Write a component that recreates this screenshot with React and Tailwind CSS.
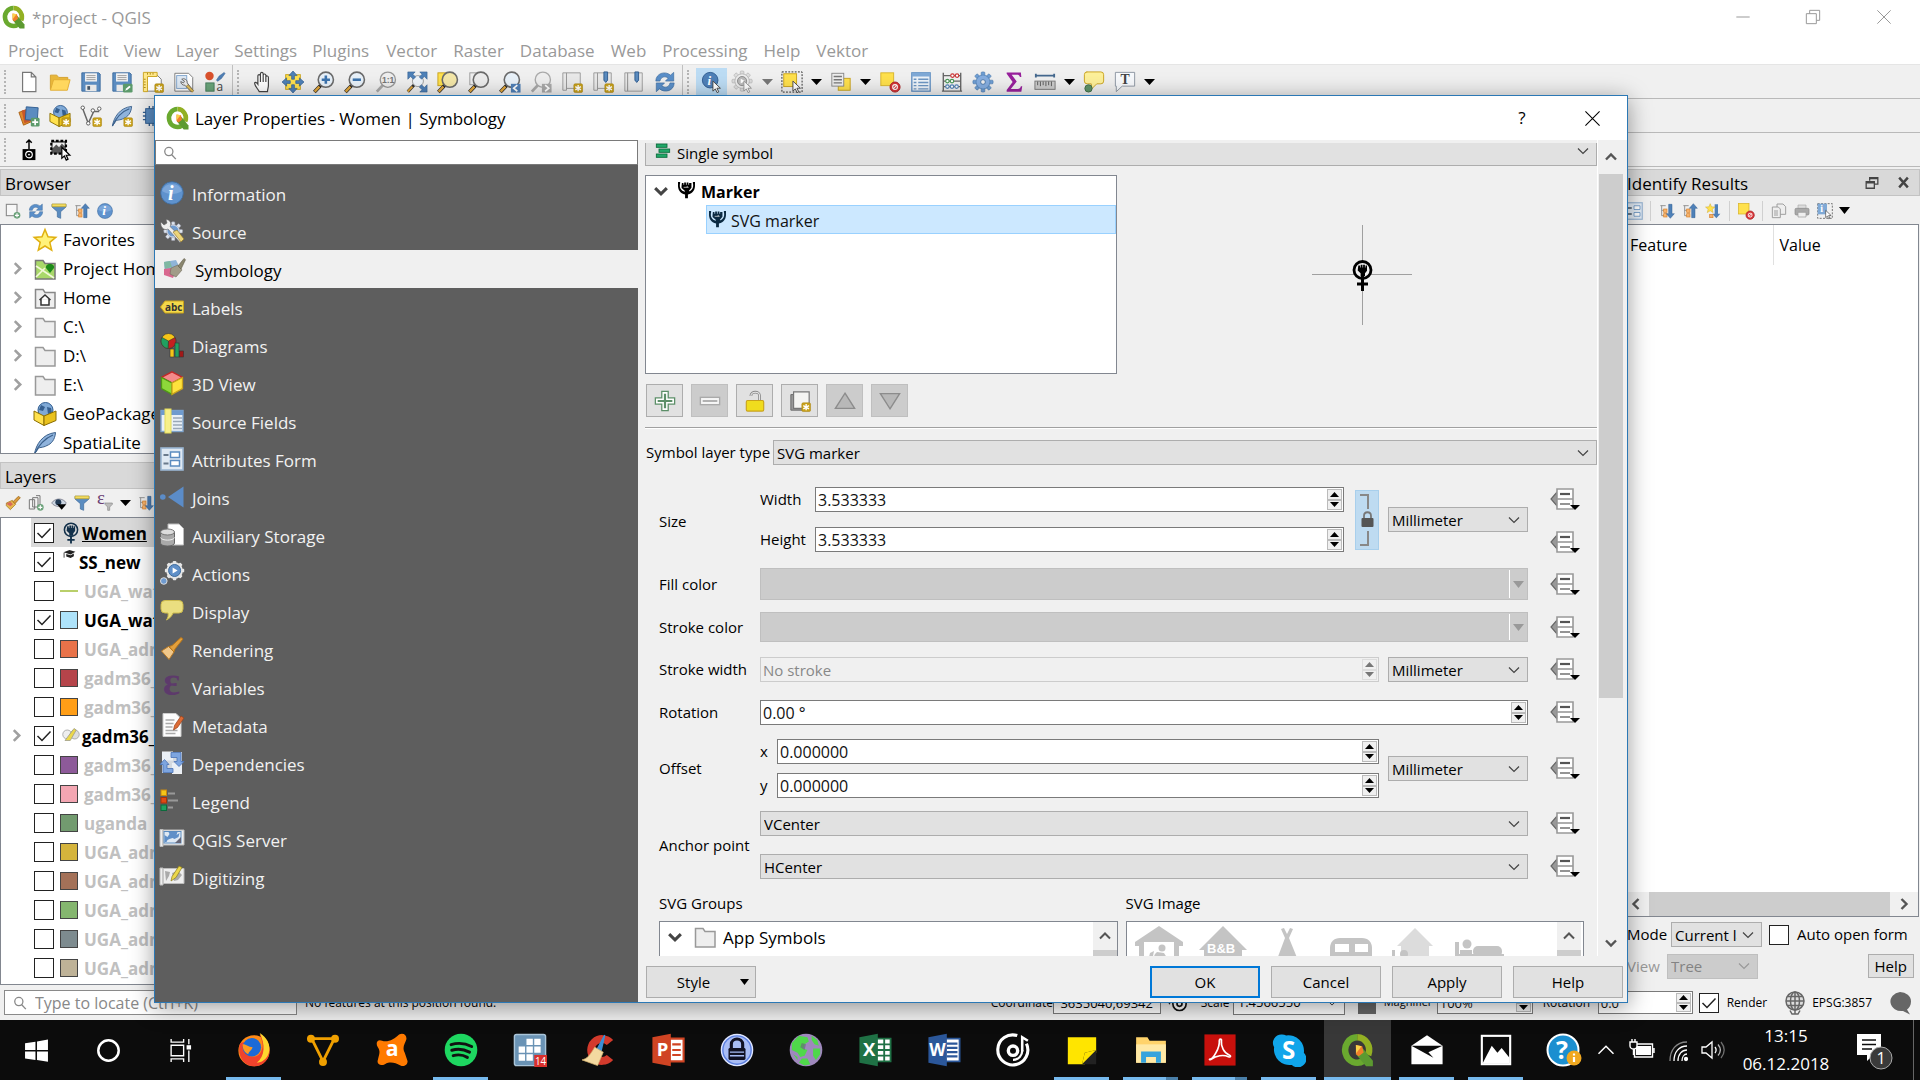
import React from 'react';

const star = 'M12 1.5l3 7.3 7.8.6-6 5 1.9 7.7L12 18l-6.7 4.1 1.9-7.7-6-5 7.8-.6z';
const badge = (
  <g>
    <rect x="14" y="14" width="9.5" height="9.5" rx="1.5" fill="#c9a21b" stroke="#a88412" strokeWidth=".6" />
    <path d="M18.7 15.2v7M15.6 17l6.2 3.6M15.6 20.6l6.2-3.6" stroke="#fff" strokeWidth="1.5" />
  </g>
);
const magnifier = (fill = '#e8f1f9', stroke = '#6b6b6b', handle = '#e3a83c') => (
  <g>
    <path d="M9 15L1.500 23" stroke="#222" strokeWidth="4" />
    <path d="M7 17L1.800 22.500" stroke={handle} strokeWidth="2.600" />
    <circle cx="14" cy="9.500" r="8.300" fill={fill} stroke={stroke} strokeWidth="1.700" />
  </g>
);
const cursor = (c = '#444', f = '#fff') => (
  <path d="M13 11v11l2.600-2.400 2 4 1.800-.9-2-3.900h3.800z" fill={f} stroke={c} strokeWidth="1" />
);
const gearPath = (
  <g>
    {[0, 45, 90, 135].map((a) => (
      <rect key={a} x="10" y="1" width="4" height="22" rx="1" transform={`rotate(${a} 12 12)`} />
    ))}
    <circle cx="12" cy="12" r="7.600" />
  </g>
);
const treeLines = (
  <g>
    <path d="M2 4h8M4 4v15h5M4 11h5" stroke="#888" strokeWidth="1.300" fill="none" />
    <rect x="7" y="9" width="5" height="5" fill="#f6b26b" stroke="#d9822b" />
    <rect x="7" y="16" width="5" height="5" fill="#f6b26b" stroke="#d9822b" />
  </g>
);
const fist = (
  <g>
    <path d="M7.800 4.500h1.800v2h.6V3.700H12v2.800h.6V3.700h1.800v2.800h.6V4.500h1.500v5.200l-2 2.500V15h-4.400v-2.800L7.200 9.600z" />
  </g>
);
const folderShape = 'M2.500 3.500h7.500l2 3h10v15.500H2.500z';

const ICONS = {
  qgis: (
    <g>
      <path d="M11.500 3a8.500 9 0 1 0 4.500 16.600" fill="none" stroke="#6aa92f" strokeWidth="4.600" />
      <path d="M11.500 3a8.500 9 0 0 1 7.700 12.500" fill="none" stroke="#93b023" strokeWidth="4.600" />
      <path d="M11 11.500l4.500-.5 7 8.500v4h-4.800L11 15.500z" fill="#5c9a30" />
      <path d="M10.500 8.500l4.500.8 1 4.500-3.500 2.600-2-1.400z" fill="#f07f2a" />
      <path d="M10.500 8.500l4 .8-3.800 5z" fill="#f9d24a" />
    </g>
  ),
  newDoc: <path d="M5 1.500h9.500l5 5v16H5zM14.500 1.500v5h5" fill="#fff" stroke="#777" strokeWidth="1.300" />,
  openFolder: (
    <g>
      <path d="M1.500 20V4.500h7l2 2.500h10v3" fill="#e8b73a" stroke="#d39f28" />
      <path d="M1.500 21L5 9.500h18L20 21z" fill="#ffd75e" stroke="#e0ac33" />
    </g>
  ),
  save: (
    <g>
      <path d="M2 2h18.500l1.500 1.500V22H2z" fill="#5b8cc0" stroke="#3c6a9c" />
      <path d="M5.500 2.500h13v9h-13z" fill="#f3f3f3" />
      <path d="M7 5h10M7 7.200h10M7 9.400h10" stroke="#999" />
      <path d="M6 15h12v7H6z" fill="#e8e8e8" />
      <path d="M8 16.500h3v4H8z" fill="#456" />
    </g>
  ),
  saveAs: (
    <g>
      <path d="M2 2h18.500l1.500 1.500V22H2z" fill="#5b8cc0" stroke="#3c6a9c" />
      <path d="M5.500 2.500h13v9h-13z" fill="#f3f3f3" />
      <path d="M7 5h10M7 7.200h10M7 9.400h10" stroke="#999" />
      <path d="M6 15h12v7H6z" fill="#e8e8e8" />
      <rect x="13" y="14" width="10.500" height="9.500" rx="1.500" fill="#5c9a6b" />
      <path d="M15.500 21.500l1-2.500 3.500-3 1.500 1.500-3.500 3z" fill="#fff" />
    </g>
  ),
  newLayout: (
    <g>
      <path d="M4 4h12l5 5v13H4z" fill="#fff" stroke="#777" />
      <path d="M1.500 1.500h15V6H6v16.500H1.500z" fill="#ffe88a" stroke="#c9a21b" />
      <path d="M6 2v2M9 2v2M12 2v2M2 9h2M2 12h2M2 15h2M2 18h2" stroke="#a88412" />
      {badge}
    </g>
  ),
  layoutMgr: (
    <g>
      <path d="M2 2.500h15l4.500 4.500v15H2z" fill="#fff" stroke="#777" />
      <rect x="4" y="5" width="11" height="14" fill="#dfeaf5" stroke="#7fa4cc" />
      <path d="M9.500 9a4 4 0 0 1 6 4l6.500 8-2 2-7-7.500a4 4 0 0 1-4.500-4l3 1.500 1-2z" fill="#eee" stroke="#666" />
      <path d="M16 15l6.500 6.500-1.500 1.700L14.500 17z" fill="#e3c05c" stroke="#8a6d1d" strokeWidth=".6" />
    </g>
  ),
  styleMgr: (
    <g>
      <circle cx="6" cy="5.500" r="4.600" fill="#d9512c" />
      <path d="M13.500 10l3-4.500L22 1.500l1 1.200-4 5.500-4 3z" fill="#4f7fb5" stroke="#2e5b8f" strokeWidth=".5" />
      <rect x="2" y="13" width="9" height="9" fill="#6aa57a" stroke="#44795a" />
      <text x="13.500" y="22" fontSize="13" fill="#444" fontFamily="Open Sans">a</text>
    </g>
  ),
  hand: (
    <path d="M7 22.500C5 19 2 16 2 13.500c0-1.600 2-1.600 3.500.9V5.500c0-2 2.600-2 2.800 0V3c.2-2 2.800-2 3 0v1.500c.3-1.800 2.700-1.600 2.900.2V6.500c.4-1.600 2.800-1.400 2.800.6v8.400c0 3-1 4.500-1 7z M8.300 5.500V12M11.300 4v8M14.200 5.500V12" fill="#fff" stroke="#444" strokeWidth="1.300" transform="translate(2 0)" />
  ),
  pan: (
    <g>
      <rect x="4" y="4" width="16" height="16" fill="#ffe14d" stroke="#c9a21b" />
      {[0, 90, 180, 270].map((a) => (
        <path key={a} d="M12 0l4.500 5h-3v4h-3V5h-3z" transform={`rotate(${a} 12 12)`} fill="#4f81b8" stroke="#2e5b8f" strokeWidth=".7" />
      ))}
    </g>
  ),
  zoomIn: <g>{magnifier()}<path d="M14 5v9M9.500 9.500h9" stroke="#3c73ad" strokeWidth="2.800" /></g>,
  zoomOut: <g>{magnifier()}<path d="M9.500 9.500h9" stroke="#3c73ad" strokeWidth="2.800" /></g>,
  zoomOne: <g><path d="M9 15L2 22.500" stroke="#aaa" strokeWidth="3" /><circle cx="14" cy="9.500" r="8.300" fill="#eee" stroke="#999" strokeWidth="1.500" /><text x="7.500" y="13" fontSize="9.500" fill="#777" fontWeight="700" fontFamily="Liberation Sans">1:1</text></g>,
  zoomFull: (
    <g>
      <path d="M9 15L2 22.500" stroke="#333" strokeWidth="3.400" /><path d="M7 17L2 22.300" stroke="#e3a83c" strokeWidth="2.200" />
      <circle cx="13" cy="11" r="6" fill="#eef4fa" stroke="#999" />
      <path d="M2 1h8L7.500 3.500l3 3-2.500 2.500-3-3L2 9zM23 1v8l-3-3-3 3-2.500-2.500 3-3L15 1zM23 23h-8l2.500-2.500-3-3L17 15l3 3 3-3z" fill="#4f81b8" stroke="#2e5b8f" strokeWidth=".6" />
    </g>
  ),
  zoomSel: <g><rect x="1" y="2" width="13" height="14" fill="#ffe14d" stroke="#c9a21b" />{magnifier('#f4e7a8')}</g>,
  zoomLayer: <g><rect x="2" y="2" width="12" height="13" fill="#eee" stroke="#999" />{magnifier('#ececec')}</g>,
  zoomLast: <g>{magnifier()}<rect x="13" y="14" width="10.500" height="9.500" fill="#4f81b8" /><path d="M20 15.500l-4 3.300 4 3.300" fill="none" stroke="#fff" strokeWidth="1.800" /></g>,
  zoomNext: <g><path d="M9 15L2 22.500" stroke="#aaa" strokeWidth="3" /><circle cx="14" cy="9.500" r="8.300" fill="#eee" stroke="#aaa" strokeWidth="1.500" /><rect x="13" y="14" width="10.500" height="9.500" fill="#aaa" /><path d="M16.500 15.500l4 3.300-4 3.300" fill="none" stroke="#fff" strokeWidth="1.800" /></g>,
  newView: <g><path d="M2 2h4v19H2zM6 2h15v17H6z" fill="#e9e9e9" stroke="#999" />{badge}</g>,
  newBookmark: <g><path d="M2 2h4v19H2zM6 2h15v17H6z" fill="#e9e9e9" stroke="#999" /><path d="M13 1h4v9l-2 2.500-2-2.500z" fill="#5b8cc0" stroke="#2e5b8f" />{badge}</g>,
  bookmark: <g><path d="M2 2h3v20H2zM5 2h16v20H5z" fill="#e9e9e9" stroke="#999" /><path d="M13 1h4v9l-2 2.500-2-2.500z" fill="#5b8cc0" stroke="#2e5b8f" /></g>,
  refresh: (
    <g fill="#5a8fc9" stroke="#3c6a9c" strokeWidth=".7">
      <path d="M2 11C2 2.500 12-.5 18 4.500L21.500 1.500V11h-9l3-3.200C11.500 5 7.500 6.500 6.500 11z" />
      <path d="M22 13c0 8.500-10 11.500-16 6.500L2.500 22.500V13h9l-3 3.200c4 2.800 8 1.300 9-3.200z" />
    </g>
  ),
  identify: <g><circle cx="10" cy="10" r="8.500" fill="#4f81b8" stroke="#2e5b8f" /><text x="7" y="15" fontSize="14" fill="#fff" fontStyle="italic" fontWeight="700" fontFamily="Liberation Serif">i</text>{cursor()}</g>,
  runAction: <g><g fill="#ddd" stroke="#aaa" strokeWidth=".6" transform="translate(-1 -1)">{gearPath}</g><circle cx="11" cy="11" r="7.800" fill="#eee" stroke="#aaa" strokeWidth=".6" /><circle cx="11" cy="11" r="5" fill="#bbb" stroke="#888" /><path d="M9.500 8.500v5l4.500-2.500z" fill="#fff" />{cursor('#999')}</g>,
  select: <g><rect x="3" y="3" width="14" height="14" fill="#ffe14d" stroke="#c9a21b" /><rect x="1" y="1" width="22" height="22" fill="none" stroke="#222" strokeDasharray="2 1.500" />{cursor()}</g>,
  selectValue: <g><rect x="9" y="8" width="13" height="13" fill="#ffe14d" stroke="#c9a21b" /><rect x="2" y="2.500" width="13" height="14" fill="#eee" stroke="#888" /><path d="M4 6h9M4 9.500h9M4 13h9" stroke="#777" strokeWidth="1.500" /></g>,
  deselect: <g><rect x="2" y="2" width="14" height="14" fill="#ffe14d" stroke="#d9b52a" /><circle cx="17.500" cy="17.500" r="5.500" fill="#d9363a" stroke="#a81f22" /><circle cx="17.500" cy="17.500" r="2.600" fill="none" stroke="#fff" strokeWidth="1.200" /><path d="M15.500 19.500l4-4" stroke="#fff" strokeWidth="1.200" /></g>,
  table: <g><rect x="2" y="2" width="20" height="20" fill="#eef4fa" stroke="#5b8cc0" strokeWidth="1.400" /><path d="M2 2h20v4H2z" fill="#7fa9d6" /><path d="M4 9h3M4 12.500h3M4 16h3M4 19.500h3M9 9h11M9 12.500h11M9 16h11M9 19.500h11" stroke="#6e97c4" strokeWidth="1.500" /></g>,
  abacus: <g fill="#fff"><path d="M2.500 2v20M21.500 2v20M1 22h22M3 5h18M3 11h18M3 17h18" stroke="#666" strokeWidth="1.500" /><g stroke="#c33" strokeWidth="1.200"><circle cx="12.500" cy="5" r="1.900" /><circle cx="17.500" cy="5" r="1.900" /></g><g stroke="#4a9a58" strokeWidth="1.200"><circle cx="7" cy="11" r="1.900" /><circle cx="12" cy="11" r="1.900" /></g><g stroke="#4f81b8" strokeWidth="1.200"><circle cx="7" cy="17" r="1.900" /><circle cx="12" cy="17" r="1.900" /><circle cx="17" cy="17" r="1.900" /></g></g>,
  gear: <g><g fill="#6f9fd4" stroke="#4876a8" strokeWidth=".6">{gearPath}</g><circle cx="12" cy="12" r="7" fill="#86aee0" /><circle cx="12" cy="12" r="2.600" fill="#f0f0f0" stroke="#4876a8" /></g>,
  sigma: <path d="M4 1.500h15.500l.5 5h-1.500c-.5-2-1.500-2.500-3.500-2.500H9.500l5.500 7.500L8.500 19.500H16c2 0 3-1 3.500-3H21l-1 6H4v-1.800L10.500 12 4 3z" fill="#98209c" />,
  ruler: <g><path d="M1 5h22M2 3v4M22 3v4" stroke="#44688e" strokeWidth="2" /><rect x="1" y="11" width="22" height="9" fill="#ccc" stroke="#777" /><path d="M4 11.500v4M7 11.500v5M10 11.500v4M13 11.500v5M16 11.500v4M19 11.500v5" stroke="#555" /></g>,
  tip: <g><path d="M4 1h15.500a3 3 0 0 1 3 3v7a3 3 0 0 1-3 3H15l-6 6v-6H4.500a3 3 0 0 1-3-3V4a3 3 0 0 1 3-3z" fill="#fdf09a" stroke="#c9a21b" /><circle cx="6" cy="19" r="4" fill="#5f9468" stroke="#3f6d49" /></g>,
  annot: <g><path d="M1.500 1.500h21v15H9l-6.500 6v-6h-1z" fill="#f7f9fc" stroke="#8a94a0" /><text x="7" y="14.500" fontSize="15" fill="#444" fontWeight="700" fontFamily="Liberation Serif">T</text></g>,
  addLayer: <g><path d="M1 8l9-3 5 13-9 4z" fill="#e08a2c" stroke="#a85f13" /><path d="M4 6l11-3 3 13-11 4z" fill="#c8582a" /><path d="M9 2l13 1-1 14-13-1z" fill="#5b8cc0" stroke="#2e5b8f" /><rect x="14" y="14" width="9.500" height="9.500" rx="1.500" fill="#5c9a6b" /><path d="M18.700 15.500v6.500M15.500 18.700h6.500" stroke="#fff" strokeWidth="1.800" /></g>,
  geopkg: <g><circle cx="12.500" cy="8" r="7.500" fill="#7fa9d6" stroke="#2e5b8f" /><path d="M8 3l4 2-2 4-4-1zM14 5l4 1 1 5-4 1z" fill="#355f8f" /><path d="M1 9l10 5v9.500L1 18z" fill="#ffe14d" stroke="#8a6d00" /><path d="M11 14l12-5v9.500l-12 5z" fill="#e9c11e" stroke="#8a6d00" /></g>,
  newGeopkg: <g><circle cx="12.500" cy="8" r="7.500" fill="#7fa9d6" stroke="#2e5b8f" /><path d="M8 3l4 2-2 4-4-1zM14 5l4 1 1 5-4 1z" fill="#355f8f" /><path d="M1 9l10 5v9.500L1 18z" fill="#ffe14d" stroke="#8a6d00" /><path d="M11 14l12-5v9.500l-12 5z" fill="#e9c11e" stroke="#8a6d00" />{badge}</g>,
  newShape: <g><path d="M3 4l6 16 6-13h6" fill="none" stroke="#666" strokeWidth="1.600" /><g fill="#fff" stroke="#555"><circle cx="3" cy="3" r="1.900" /><circle cx="9" cy="20" r="1.900" /><circle cx="14" cy="6" r="1.900" /><circle cx="21" cy="4" r="1.900" /></g>{badge}</g>,
  feather: <g><path d="M1.500 23C3 14 9 3 22.500 1.500 22 9 18 13 14 14.500 10 17 5 16 5 18z" fill="#8fb3dc" stroke="#3a5f8a" /><path d="M1.500 23C5 15 12 7 20 4" fill="none" stroke="#3a5f8a" strokeWidth="1.200" /></g>,
  newSpatialite: <g><path d="M1.500 23C3 14 9 3 22.500 1.500 22 9 18 13 14 14.500 10 17 5 16 5 18z" fill="#8fb3dc" stroke="#3a5f8a" /><path d="M1.500 23C5 15 12 7 20 4" fill="none" stroke="#3a5f8a" strokeWidth="1.200" />{badge}</g>,
  chip: <g><path d="M1 8h22M1 12h22M1 16h22M8 1v22M12 1v22M16 1v22" stroke="#345f8f" strokeWidth="1.500" /><rect x="4" y="4" width="16" height="16" fill="#5b8cc0" stroke="#2e5b8f" />{badge}</g>,
  camera: <g><path d="M12 1v10M9 4l3-3 3 3" stroke="#000" strokeWidth="1.600" fill="none" /><path d="M5 11h14v12H5z" fill="#000" /><circle cx="12" cy="17" r="3.600" fill="none" stroke="#fff" strokeWidth="1.300" /><circle cx="12" cy="17" r="1" fill="#fff" /></g>,
  imgSelect: <g><rect x="2.500" y="2" width="16" height="14" fill="#555" stroke="#000" strokeWidth="2.400" strokeDasharray="3 2" /><path d="M4 10l4-4 3 3 3-4 3 3V4H4z" fill="#eee" /><path d="M14 9v12l2.800-2.500 2 4.500 2-1-2-4.300h4z" fill="#fff" stroke="#000" strokeWidth="1.300" /></g>,
  addItem: <g><rect x="2" y="2" width="16" height="17" fill="#f7f7f7" stroke="#888" strokeWidth="1.600" /><circle cx="18" cy="18.500" r="5" fill="#6ba27a" /><path d="M18 15.500v6M15 18.500h6" stroke="#fff" strokeWidth="1.700" /></g>,
  filter: <g><path d="M1.500 2h21v4L14.500 13v10l-5-2v-8L1.500 6z" fill="#5b8cc0" stroke="#3c6a9c" /><path d="M1.500 1.500h21v4h-21z" fill="#f1dc62" stroke="#bfa52a" /></g>,
  collapse: <g>{treeLines}<path d="M17 1l6 7h-3.500v14h-5V8H11z" fill="#4f81b8" stroke="#2e5b8f" strokeWidth=".7" /></g>,
  expand: <g>{treeLines}<path d="M17 23l6-7h-3.500V2h-5v14H11z" fill="#4f81b8" stroke="#2e5b8f" strokeWidth=".7" /></g>,
  expandNew: <g><path d="M17 23l6-7h-3.500V2h-5v14H11z" fill="#4f81b8" /><path d={star} transform="scale(.65)" fill="#ffe14d" stroke="#c9a21b" /><rect x="7" y="17" width="5" height="5" fill="#f6b26b" stroke="#d9822b" /></g>,
  info: <g><circle cx="12" cy="12" r="11.300" fill="#5f92cd" stroke="#3c6a9c" strokeWidth=".8" /><path d="M2 10a10.500 10 0 0 1 20 0c-6 4-14 4-20 0z" fill="#8db4e2" opacity=".6" /><text x="8" y="18.500" fontSize="20" fill="#fff" fontStyle="italic" fontWeight="700" fontFamily="Liberation Serif">i</text></g>,
  star: <path d={star} fill="#fff27a" stroke="#e0b010" strokeWidth="1.500" />,
  projectHome: <g><path d={folderShape} fill="#a9d86a" stroke="#777" strokeWidth="1.500" /><path d="M3 9l18 12M3 20l9-9" stroke="#f2f8d8" strokeWidth="1.600" /><path d="M17 7c3 0 4.500 2 4 4L17 16l-4-5c-.5-2 1-4 4-4z" fill="#1d8a1a" /></g>,
  home: <g><path d={folderShape} fill="#eee" stroke="#888" strokeWidth="1.500" /><path d="M6.500 14L12 9l5.500 5M8 13v6h8v-6" fill="#fff" stroke="#333" strokeWidth="1.500" /></g>,
  folder: <path d={folderShape} fill="#eee" stroke="#999" strokeWidth="1.500" />,
  brushSmall: <g><path d="M2 12l9-4 5 6-8 8-6-6z" fill="#e6b94f" stroke="#a0701a" /><path d="M2 13l6-3 4 4-4 3z" fill="#d86a5a" /><path d="M12 10l8-8 3 2-8 9z" fill="#d99a3e" stroke="#96610f" /></g>,
  addGroup: <g><path d="M2 7h8v14H2zM7 4h8v14H7zM12 1h6v17" fill="#f4f4f4" stroke="#777" strokeWidth="1.500" /><circle cx="18.500" cy="18.500" r="5" fill="#6ba27a" /><path d="M18.500 15.500v6M15.500 18.500h6" stroke="#fff" strokeWidth="1.700" /></g>,
  eye: <g><path d="M1 12c5-8 17-8 22 0-5 7-17 7-22 0z" fill="#ccd6e2" stroke="#667" /><circle cx="11" cy="11" r="4.500" fill="#223a55" /><path d="M9 14h14l-7 8z" fill="#000" /></g>,
  epsFilter: <g><text x="0" y="14" fontSize="28" fill="#6a3f74" fontFamily="Liberation Serif">ε</text><path d="M12 12h11v2l-4 4v5h-3v-5l-4-4z" fill="#bbb" stroke="#888" /></g>,
  source: <g><g fill="#dfe6ee" stroke="#99a" strokeWidth=".6" transform="translate(3 2) scale(.85)">{gearPath}</g><circle cx="13" cy="12" r="5.500" fill="#6f9bd0" /><path d="M1 3l3 3 3-2-1-3.500c4 0 6 4 4 7L23 20l-3 3.500L8 10c-4 2-8-2-7-7z" fill="#eee" stroke="#666" strokeWidth=".6" /><path d="M13 13l4-2 7 9-3 3z" fill="#ecd47a" stroke="#8a6d1d" strokeWidth=".6" /></g>,
  symbology: <g><path d="M2 5l12-2 4 8-7 9-8-3z" fill="#8fb4d8" /><path d="M2 5l6-1 2 6-7 2z" fill="#7fb8a2" /><path d="M2 12l7-1 4 5-2 5-9-3z" fill="#d9688f" /><path d="M9 11l7-3 4 5-6 7-6-3z" fill="#a19c88" stroke="#716c5a" strokeWidth=".6" /><path d="M16 9l6-7.500 1.500 1.200L19 12z" fill="#8a866f" stroke="#5f5a48" strokeWidth=".6" /></g>,
  labels: <g><path d="M.5 12L5 6h18.500v12H5z" fill="#f4d94a" stroke="#c9a21b" /><text x="5" y="15.500" fontSize="10" fill="#333" fontWeight="700" fontFamily="Open Sans">abc</text></g>,
  diagrams: <g stroke="#333" strokeWidth=".6"><circle cx="8.500" cy="8" r="7.500" fill="#f5c518" /><path d="M8.500 8L2 4.500A7.500 7.500 0 0 0 8 15.500z" fill="#20a060" /><path d="M8.500 8L15 4.500A7.500 7.500 0 0 1 8.500 15.500z" fill="#c62020" /><rect x="10" y="16" width="4" height="8" fill="#f5c518" /><rect x="15" y="10" width="4" height="14" fill="#20a060" /><rect x="19.500" y="18" width="4" height="6" fill="#a01818" /></g>,
  cube: <g strokeWidth="1.300"><path d="M12 .8l10.500 5.500L12 12 1.500 6.300z" fill="#f48a8a" stroke="#c02828" /><path d="M1.500 6.500L12 12v11.300L1.500 17.500z" fill="#8ed83a" stroke="#4f9a14" /><path d="M22.500 6.500L12 12v11.300l10.500-5.800z" fill="#ffe23c" stroke="#c9a21b" /></g>,
  fields: <g><rect x="1" y="1.500" width="22" height="21" fill="#e9f0f7" stroke="#7fa4cc" strokeWidth="1.400" /><path d="M1 1.500h22V6H1z" fill="#6f9bcf" /><path d="M13 9h9M13 12.500h9M13 16h9M13 19.500h9" stroke="#9aa8b8" strokeWidth="1.400" /><rect x="5" y="0" width="6" height="24" fill="#f7f08a" stroke="#e6dc5a" /></g>,
  form: <g><rect x="1" y="1" width="22" height="22" fill="#dfe9f3" stroke="#9ab6d3" strokeWidth="1.600" /><path d="M3.500 8h5M3.500 16.500h5" stroke="#6a7a8c" strokeWidth="1.800" /><rect x="10.500" y="5" width="9" height="5.500" fill="#fff" stroke="#5b8cc0" strokeWidth="1.500" /><rect x="10.500" y="13.500" width="9" height="5.500" fill="#fff" stroke="#5b8cc0" strokeWidth="1.500" /></g>,
  joins: <g fill="#5b8cc8"><path d="M23.500 1.500v21L8 12z" /><circle cx="2.800" cy="12" r="2.800" /></g>,
  storage: <g><path d="M8 1h11l4.500 4.500V22H8z" fill="#fff" stroke="#bbb" /><path d="M.5 9v11c0 4 14 4 14 0V9z" fill="#a9a9a9" stroke="#666" /><ellipse cx="7.500" cy="9" rx="7" ry="3" fill="#ddd" stroke="#777" /><path d="M.5 14.500c1 3.500 13 3.500 14 0" fill="none" stroke="#eee" /></g>,
  actions: <g><g transform="translate(4 -1) scale(.88)" fill="#e6e6e6">{gearPath}<circle cx="12" cy="12" r="9.500" /></g><circle cx="14.600" cy="9.500" r="6" fill="#5f8fc8" stroke="#3c6a9c" /><path d="M12.600 6.500v6l5-3z" fill="#fff" /><circle cx="3.800" cy="20" r="3.300" fill="#6f9bd0" stroke="#ddd" /></g>,
  display: <path d="M5 1.500h14a4 4 0 0 1 4 4v4.500a4 4 0 0 1-4 4h-6c-1 3-3 5-6.500 7 1.500-2.500 2-4.500 1.500-7H5a4 4 0 0 1-4-4V5.500a4 4 0 0 1 4-4z" fill="#eade80" stroke="#cdbb4c" />,
  rendering: <g><path d="M1.500 14l7-4.500 5.500 5.500L9 22.500z" fill="#f0c78a" stroke="#b97a26" /><path d="M9 9.500l3-1L21 .5l2 1.500-8 10-1 3z" fill="#e3a03c" stroke="#b5741a" /></g>,
  variables: <text x="3" y="20" fontSize="40" fill="#5d3a6b" fontWeight="700" fontFamily="Liberation Serif">ε</text>,
  metadata: <g><path d="M3 .5h13l5 5v18H3z" fill="#fdfdfd" stroke="#ccc" /><path d="M5.500 7h9M5.500 10.500h8M5.500 14h7M5.500 17.500h12M5.500 20.500h10" stroke="#aaa" strokeWidth="1.300" /><path d="M13.500 17l1-4.500L21 3l3 2-6.500 9.500z" fill="#dd6b35" stroke="#97401a" strokeWidth=".7" /></g>,
  deps: <g><path d="M2 .5h11v9H2zM12 12h10v11H12z" fill="#f2f2f2" /><rect x="2" y="1" width="20" height="21" fill="#e9eef6" opacity=".85" /><path d="M11 1.500h10v9h3l-5 5-5-5h3v-4h-6zM13 21.500H3v-8H0l4.500-5 4.500 5H7v4h6z" fill="#7da5e0" stroke="#4a72b5" strokeWidth=".8" /></g>,
  legend: <g><path d="M8 4.500h7M8 11.500h10M8 18.500h5" stroke="#999" strokeWidth="1.800" /><rect x="1" y="1" width="5.500" height="5.500" fill="#f5c518" stroke="#c98a10" /><rect x="1" y="8.500" width="5.500" height="5.500" fill="#e04a14" stroke="#a83208" /><rect x="1" y="16" width="5.500" height="5.500" fill="#20a060" stroke="#0c6b3c" /></g>,
  server: <g><path d="M0 2.500h3v17H0zM3 3h21v15H3z" fill="#eee" stroke="#bbb" /><rect x="4" y="4.500" width="17" height="11.500" fill="#dfe9f3" stroke="#5b8cc0" /><path d="M4.500 15V8l3 2 2-3-1-2h9l-1 3 3-2-1 4-4 2-2-1-3 1-2 1-1 2z" fill="#5f8fc8" /><path d="M15 16l6-6v6z" fill="#667" /></g>,
  digitizing: <g><path d="M0 3h3v17H0zM3 3.500h21v15H3z" fill="#eee" stroke="#bbb" /><path d="M5 6l5 1-1 4-3 5zM12 8l6-2 4 4-4 5-4 1z" fill="#aaa" /><path d="M11 16l1-4.500L19 1l3 1.500-6 10z" fill="#ecd84a" stroke="#8a7a1d" strokeWidth=".7" /></g>,
  women: <g><circle cx="12" cy="8.500" r="7.200" fill="none" stroke="currentColor" strokeWidth="1.700" /><g fill="currentColor">{fist}</g><path d="M12 15v8.500M8 19.500h8" stroke="currentColor" strokeWidth="2" /></g>,
  cap: <g fill="#222"><path d="M1 6l11-4 11 3-9 5z" /><path d="M6 9l8 2.500 6-3v5l-6 3-8-2.500z" /><path d="M2 7v9" stroke="#222" strokeWidth="1.500" /></g>,
  rules: <g><circle cx="7" cy="10" r="6" fill="#eee" stroke="#999" /><circle cx="17" cy="10" r="6" fill="#ddd" stroke="#999" /><path d="M4 18l12-16 3 2-8 14z" fill="#ecd84a" stroke="#998" /></g>,
  fistCut: <g fill="currentColor"><path d="M0 0h3v1.500C1.500 8 4 12.500 10 14h4c6-1.500 8.500-6 7-12.500V0h3v3c.5 8-3 13-10 14.500V23h-4v-5.500C3 16 -.5 11 0 3z" /><path d="M5.500 1.500h2.200v2.300h1V.8h2.500v3h1v-3h2.500v3h1V1.500H19V8l-3.500 4.500V15h-6v-2.500L5 8.500V6z" /><path d="M8 7.500h7M13 5.500v2" stroke="#fff" strokeWidth=".9" /></g>,
  singleSym: <g fill="#20a868" stroke="#0c6b3c" strokeWidth="1.300"><rect x="2" y="1.500" width="16" height="5" /><rect x="6" y="9" width="16" height="5" /><rect x="2" y="16.500" width="16" height="5" /></g>,
  plus: <g><path d="M8.500 1.500h7v7h7v7h-7v7h-7v-7h-7v-7h7z" fill="#fff" stroke="#5c8f68" strokeWidth="1.400" /><path d="M12 4v16M4 12h16" stroke="#5c8f68" strokeWidth="2.400" /></g>,
  minus: <g><rect x="1.500" y="8" width="21" height="8" fill="#f6f6f6" stroke="#aaa" strokeWidth="1.500" /><path d="M4 12h16" stroke="#aaa" strokeWidth="2" /></g>,
  unlock: <g><path d="M7.500 6.500c0-5.500 9.500-5.500 9.500 0v5" fill="none" stroke="#888" strokeWidth="3" /><path d="M7.500 6.500c0-5.500 9.500-5.500 9.500 0v5" fill="none" stroke="#e6e6e6" strokeWidth="1.200" /><rect x="2.500" y="11.500" width="19" height="11.500" rx="1.500" fill="#f0dc1e" stroke="#c9a21b" strokeWidth="1.200" /></g>,
  duplicate: <g><path d="M2 5h5v14h12v3H2z" fill="#999" stroke="#666" /><path d="M5 2h17v18H5z" fill="#f4f4f2" stroke="#777" strokeWidth="1.300" />{badge}</g>,
  up: <path d="M12 3.500L22.500 20h-21z" fill="#b8b8b8" stroke="#8c8c8c" strokeWidth="1.500" />,
  down: <path d="M12 20.500L22.500 4h-21z" fill="#b8b8b8" stroke="#8c8c8c" strokeWidth="1.500" />,
  search: <g fill="none" stroke="#888" strokeWidth="2.200"><circle cx="10" cy="9.500" r="7" /><path d="M15 15l7 7.500" /></g>,
  copy: <g fill="#eee" stroke="#999" strokeWidth="1.400"><path d="M9 1.500h9l4 4V17H9z" /><path d="M2 6h9l3 3v13H2z" /><path d="M4.500 12h6M4.500 15h6M4.500 18h6" /></g>,
  print: <g><path d="M6 3h12v6H6z" fill="#ddd" stroke="#aaa" /><rect x="1.500" y="8" width="21" height="10" rx="2" fill="#a9a9a9" stroke="#888" /><path d="M6 14h12v7H6z" fill="#eee" stroke="#999" /></g>,
  identifyMode: <g><rect x="1" y="1" width="22" height="22" fill="none" stroke="#777" strokeDasharray="3 2" strokeWidth="1.500" /><rect x="1" y="1" width="14" height="16" fill="#7fa9d6" /><text x="5" y="14" fontSize="15" fill="#fff" fontWeight="700" fontFamily="Liberation Serif">i</text>{cursor()}</g>,
  formView: <g><rect x="1" y="1" width="22" height="22" fill="#e4edf6" stroke="#9ab6d3" strokeWidth="1.600" /><path d="M3 8h6M3 16h6" stroke="#456" strokeWidth="2" /><path d="M12 5h8v5h-8zM12 14h8v5h-8z" fill="#fff" stroke="#5b8cc0" /></g>,
  float: <g fill="none" stroke="#444" strokeWidth="2.200"><path d="M8 8V3h14v11h-5" /><path d="M2 9.500h14V21H2z" /><path d="M8 4h14M2 11h14" strokeWidth="3.500" /></g>,
  close: <path d="M4 3l16 18M20 3L4 21" stroke="#444" strokeWidth="4.500" />,
  thinClose: <path d="M2 2l20 20M22 2L2 22" stroke="currentColor" strokeWidth="1.500" />,
  restore: <g fill="none" stroke="#999" strokeWidth="1.500"><path d="M2 7h15v15H2z" /><path d="M7 7V2h15v15h-5" /></g>,
  minimize: <path d="M2 12h20" stroke="#999" strokeWidth="1.500" />,
  extents: <g fill="none" stroke="#111" strokeWidth="2"><circle cx="15" cy="13" r="8" fill="#fff" /><circle cx="15" cy="13" r="3" /><path d="M0 8l3 4 3-7 3 4" /></g>,
  globe: <g fill="none" stroke="#666" strokeWidth="1.500"><circle cx="12" cy="10" r="9" fill="#ddd" /><ellipse cx="12" cy="10" rx="4.500" ry="9" /><path d="M3 10h18M5 5.500h14M5 14.500h14M12 1v22M7 19.500l2 3.500h6l2-3.500" /></g>,
  bubble: <path d="M12 1a11 9.500 0 0 1 11 9.500c0 4-2 6.500-4 8l3 5-7-3.500A11 9.500 0 1 1 12 1z" fill="#666" />,
};

function Icon({ n, className = 'size-6' }) {
  return (
    <svg viewBox="0 0 24 24" className={'shrink-0 overflow-visible ' + className} aria-hidden="true">
      {ICONS[n]}
    </svg>
  );
}
const Chevron = ({ d = 'down', className = 'size-3', w = 2 }) => {
  const p = { down: 'M1 3.500l5 5 5-5', up: 'M1 8.500l5-5 5 5', right: 'M3.500 1l5 5-5 5', left: 'M8.500 1l-5 5 5 5' }[d];
  return (
    <svg viewBox="0 0 12 12" className={'shrink-0 ' + className} aria-hidden="true">
      <path d={p} fill="none" stroke="currentColor" strokeWidth={w} />
    </svg>
  );
};
const Tri = ({ className = 'w-[11px] h-[6px]', up }) => (
  <svg viewBox="0 0 10 6" className={'shrink-0 ' + className} preserveAspectRatio="none" aria-hidden="true">
    <path d={up ? 'M0 6h10L5 0z' : 'M0 0h10L5 6z'} fill="currentColor" />
  </svg>
);

const Handle = () => <div className="mx-1 h-6 w-0 border-l-2 border-dotted border-[#b5b5b5]" />;
const Tool = ({ n, active }) => (
  <button aria-label={n} className={'flex h-7 w-[31px] shrink-0 items-center justify-center ' + (active ? 'bg-[#bcdcf4]' : '')}>
    <Icon n={n} className="size-[22px]" />
  </button>
);
const DropTool = ({ muted }) => (
  <button aria-label="More" className={'flex h-7 w-[18px] shrink-0 items-center justify-center ' + (muted ? 'text-[#777]' : 'text-black')}>
    <Tri />
  </button>
);

function Combo({ label, options, className = '', disabled, id }) {
  return (
    <div className={'relative h-[25px] border text-[15px] ' + (disabled ? 'border-[#bfbfbf] bg-[#ccc] text-[#838383] ' : 'border-[#adadad] bg-[#e1e1e1] text-black ') + className}>
      <select id={id} aria-label={label} disabled={disabled} className="block h-full w-full appearance-none bg-transparent pl-[3px] pr-6 leading-[22px] outline-none">
        {options.map((o) => <option key={o}>{o}</option>)}
      </select>
      <span className={'pointer-events-none absolute inset-y-0 right-[7px] flex items-center ' + (disabled ? 'text-[#999]' : 'text-[#444]')}>
        <Chevron w={1.2} />
      </span>
    </div>
  );
}

function RendererCombo() {
  return (
    <div className="relative h-[23px] shrink-0 border border-t-0 border-[#adadad] bg-[#e1e1e1] text-[15px] text-black">
      <span className="pointer-events-none absolute left-[9px] top-0"><Icon n="singleSym" className="size-4" /></span>
      <select aria-label="Renderer" className="block h-5 w-full appearance-none bg-transparent pl-[31px] pr-6 leading-5 outline-none">
        <option>Single symbol</option>
      </select>
      <span className="pointer-events-none absolute right-[7px] top-[2px] text-[#444]"><Chevron w={1.2} /></span>
    </div>
  );
}

function Spin({ label, value, className = '', disabled, id, small }) {
  const b = 'flex flex-1 items-center justify-center border ' + (disabled ? 'border-[#ddd] text-[#777]' : 'border-[#bbb] bg-[#f0f0f0] text-black');
  return (
    <div className={'flex border ' + (small ? 'text-[13px] h-[23px] ' : 'text-[16px] h-[25px] ') + (disabled ? 'border-[#ccc] bg-[#f0f0f0] ' : 'border-[#7a7a7a] bg-white ') + className}>
      <input id={id} aria-label={label} defaultValue={value} disabled={disabled} className={'min-w-0 flex-1 bg-transparent pl-[2px] leading-none outline-none ' + (disabled ? 'text-[15px] text-[#888]' : 'text-[#111]')} />
      <span className="m-px flex w-[15px] flex-col">
        <button aria-label={label + ' up'} disabled={disabled} className={b}><Tri up className="h-[5px] w-[9px]" /></button>
        <button aria-label={label + ' down'} disabled={disabled} className={b}><Tri className="h-[5px] w-[9px]" /></button>
      </span>
    </div>
  );
}

const Override = ({ label }) => (
  <button aria-label={label} className="flex h-[25px] w-[30px]">
    <svg viewBox="0 0 30 25" className="h-[25px] w-[30px]" aria-hidden="true">
      <path d="M7 5v14L1 12z" fill="#999" stroke="#666" strokeWidth="1.200" />
      <path d="M7 2h16v20H7z" fill="#fff" stroke="#999" strokeWidth="1.600" />
      <path d="M7 12h16" stroke="#999" strokeWidth="1.600" />
      <path d="M10 7h10" stroke="#555" strokeWidth="2.200" />
      <path d="M10 17h10" stroke="#888" strokeWidth="1.800" />
      <path d="M20 18h10l-5 5z" fill="#000" />
    </svg>
  </button>
);

const DockTitle = ({ children, tools }) => (
  <div className="flex h-[27px] shrink-0 items-center border border-[#c3c3c3] bg-[#d9d9d9] pl-[4px] pr-[9px] text-[17px]">
    <h2 className="flex-1 pt-[2px]">{children}</h2>
    {tools && (
      <span className="flex gap-[18px]">
        <button aria-label="Float"><Icon n="float" className="size-[14px]" /></button>
        <button aria-label="Close"><Icon n="close" className="size-[13px]" /></button>
      </span>
    )}
  </div>
);

const BROWSER = [
  ['star', 'Favorites', false], ['projectHome', 'Project Home', true], ['home', 'Home', true], ['folder', 'C:\\', true],
  ['folder', 'D:\\', true], ['folder', 'E:\\', true], ['geopkg', 'GeoPackage', false], ['feather', 'SpatiaLite', false],
];
const LAYERS = [
  { t: 'Women', on: true, icon: 'women', sel: true },
  { t: 'SS_new', on: true, icon: 'cap' },
  { t: 'UGA_wat', line: true },
  { t: 'UGA_wat', on: true, c: '#aee3fb' },
  { t: 'UGA_adm', c: '#e87249' },
  { t: 'gadm36_', c: '#b5444a' },
  { t: 'gadm36_', c: '#ff9e17' },
  { t: 'gadm36_', on: true, icon: 'rules', exp: true },
  { t: 'gadm36_', c: '#8d5a99' },
  { t: 'gadm36_', c: '#f3a6b2' },
  { t: 'uganda', c: '#729b6f' },
  { t: 'UGA_adm', c: '#d5b43c' },
  { t: 'UGA_adm', c: '#a47158' },
  { t: 'UGA_adm', c: '#85b66f' },
  { t: 'UGA_adm', c: '#7d8b8f' },
  { t: 'UGA_adm', c: '#beb297' },
];

function Check({ on, label, id }) {
  return (
    <span className="relative flex size-5 shrink-0">
      <input id={id} type="checkbox" defaultChecked={on} aria-label={label} className="peer size-5 appearance-none border border-[#222] bg-white" />
      <svg viewBox="0 0 20 20" className="pointer-events-none absolute inset-0 size-5 opacity-0 peer-checked:opacity-100" aria-hidden="true">
        <path d="M3.500 10l4.500 4.500 8.500-9" fill="none" stroke="#222" strokeWidth="1.500" />
      </svg>
    </span>
  );
}

const layerIcon = { women: 'size-[22px] text-[#12304a]', cap: 'mb-3 size-[13px]', rules: 'size-[18px]' };

function LeftDock() {
  return (
    <aside className="flex w-[300px] flex-col">
      <DockTitle>Browser</DockTitle>
      <div className="flex h-7 shrink-0 items-center gap-[7px] px-[5px] pt-px">
        {['addItem', 'refresh', 'filter', 'collapse', 'info'].map((n) => (
          <button key={n} aria-label={n}><Icon n={n} className="size-4" /></button>
        ))}
      </div>
      <ul className="h-[230px] shrink-0 overflow-hidden border border-[#828790] bg-white text-[17px]">
        {BROWSER.map(([n, t, e]) => (
          <li key={t} className="flex h-[29px] items-center">
            <span className="flex w-[32px] justify-center text-[#a0a0a0]">{e && <Chevron d="right" className="size-[13px]" w={2.4} />}</span>
            <Icon n={n} className="size-6" />
            <span className="ml-[6px] pt-px">{t}</span>
          </li>
        ))}
      </ul>
      <div className="h-2 shrink-0" />
      <DockTitle>Layers</DockTitle>
      <div className="flex h-7 shrink-0 items-center gap-[7px] px-[5px]">
        {['brushSmall', 'addGroup', 'eye', 'filter', 'epsFilter'].map((n) => (
          <button key={n} aria-label={n}><Icon n={n} className="size-4" /></button>
        ))}
        <Tri className="h-[6px] w-[11px]" />
        <button aria-label="expand"><Icon n="expand" className="size-4" /></button>
      </div>
      <ul className="min-h-0 flex-1 overflow-hidden border border-[#828790] bg-white text-[17px] font-bold">
        {LAYERS.map((l, i) => (
          <li key={i} className="flex h-[29px] items-center">
            <span className="flex w-[30px] justify-center text-[#a0a0a0]">{l.exp && <Chevron d="right" className="size-[13px]" w={2.4} />}</span>
            <label className={'flex h-full flex-1 items-center pl-[3px] ' + (l.sel ? 'bg-[#d9d9d9] underline' : '') + (l.on ? '' : ' text-[#c0c0c0]')}>
              <Check on={l.on} />
              <span className={'ml-[6px] flex justify-center ' + (l.icon && l.icon !== 'cap' ? 'w-[21px]' : 'w-[18px]')}>
                {l.c && <span className="size-[18px] border border-[#444]" style={{ background: l.c }} />}
                {l.line && <span className="h-[2px] w-[18px] bg-[#b9cf6a]" />}
                {l.icon && <Icon n={l.icon} className={layerIcon[l.icon]} />}
              </span>
              <span className={l.icon ? 'ml-px pt-[2px]' : 'ml-[6px] pt-[2px]'}>{l.t}</span>
            </label>
          </li>
        ))}
      </ul>
    </aside>
  );
}

function RightDock() {
  const sep = <span className="mx-[2px] h-5 w-px bg-[#d0d0d0]" />;
  return (
    <aside className="flex w-[298px] flex-col">
      <DockTitle tools>Identify Results</DockTitle>
      <div className="flex h-7 shrink-0 items-center gap-[5px] pl-[3px] pt-px">
        <Icon n="formView" className="size-[18px]" />
        {sep}
        {['expand', 'collapse', 'expandNew'].map((n) => <button key={n} aria-label={n}><Icon n={n} className="size-[18px] p-px" /></button>)}
        {sep}
        <button aria-label="Clear"><Icon n="deselect" className="size-[18px]" /></button>
        {sep}
        {['copy', 'print', 'identifyMode'].map((n) => <button key={n} aria-label={n}><Icon n={n} className="size-[18px] p-px" /></button>)}
        <Tri className="h-[7px] w-[11px]" />
      </div>
      <div className="mr-px flex min-h-0 flex-1 flex-col border border-[#828790] bg-white">
        <table className="w-full text-left text-[16px]">
          <thead>
            <tr className="h-[40px]">
              <th className="w-[150px] border-r border-[#e0e0e0] pl-[7px] font-normal">Feature</th>
              <th className="pl-[6px] font-normal">Value</th>
            </tr>
          </thead>
        </table>
        <div className="mt-auto flex h-6 items-center bg-[#f0f0f0] text-[#555]">
          <button aria-label="Scroll left" className="flex w-[26px] justify-center"><Chevron d="left" w={2.4} /></button>
          <div className="h-full flex-1 bg-[#cdcdcd]" />
          <button aria-label="Scroll right" className="flex w-[28px] justify-center"><Chevron d="right" w={2.4} /></button>
        </div>
      </div>
      <div className="mt-[5px] flex h-[25px] items-center text-[15px]">
        <label htmlFor="mode" className="w-[49px] pl-[5px]">Mode</label>
        <Combo id="mode" options={['Current layer']} className="w-[91px]" />
        <label className="ml-[7px] flex items-center gap-2"><Check />Auto open form</label>
      </div>
      <div className="mb-[6px] mt-[6px] flex h-[26px] items-center text-[15px]">
        <label htmlFor="view" className="w-[45px] pl-[5px] text-[#999]">View</label>
        <Combo id="view" options={['Tree']} disabled className="w-[91px]" />
        <button className="ml-auto mr-[6px] h-[24px] border border-[#adadad] bg-[#e1e1e1] px-[6px] leading-[20px]">Help</button>
      </div>
    </aside>
  );
}

function StatusBar() {
  return (
    <footer className="flex h-[35px] shrink-0 items-center bg-[#f0f0f0] pl-1 text-[13px]">
      <div className="flex h-[25px] w-[293px] items-center border border-[#8a8a8a] bg-white pl-2">
        <Icon n="search" className="size-[14px]" />
        <input aria-label="Type to locate" placeholder="Type to locate (Ctrl+K)" className="ml-2 flex-1 text-[16px] outline-none placeholder:text-[#888]" />
      </div>
      <span className="ml-2 flex-1 pt-px text-[12px]">No features at this position found.</span>
      <label htmlFor="coord" className="w-[62px] whitespace-nowrap text-[12px]">Coordinate</label>
      <input id="coord" defaultValue="3635040,69342" className="h-[23px] w-[108px] border border-[#7a7a7a] bg-white text-center" />
      <Icon n="extents" className="mx-[5px] h-5 w-[22px]" />
      <label htmlFor="scale" className="ml-[8px] w-8 text-[12px]">Scale</label>
      <div className="relative">
        <select id="scale" className="block h-6 w-[112px] appearance-none border border-[#7a7a7a] bg-white pl-1"><option>1:4566550</option></select>
        <span className="pointer-events-none absolute inset-y-0 right-2 flex items-center text-[#444]"><Chevron w={1.2} className="size-[10px]" /></span>
      </div>
      <svg viewBox="0 0 18 22" className="ml-[13px] h-[22px] w-[18px]" aria-hidden="true"><path d="M0 9h18v13H0z" fill="#666" /><path d="M4 9V5a5 5 0 0 1 10 0v4" fill="none" stroke="#666" strokeWidth="2" /></svg>
      <label htmlFor="mag" className="ml-[8px] w-[53px] whitespace-nowrap text-[11px]">Magnifier</label>
      <Spin small id="mag" label="Magnifier" value="100%" className="w-24" />
      <label htmlFor="rot" className="ml-[10px] w-[55px] text-[12px]">Rotation</label>
      <Spin small id="rot" label="Map rotation" value="0.0" className="w-[95px]" />
      <label className="ml-[6px] flex items-center gap-[8px] text-[12px]"><Check on />Render</label>
      <Icon n="globe" className="ml-4 size-6" />
      <button className="ml-[5px] whitespace-nowrap text-[12px]">EPSG:3857</button>
      <Icon n="bubble" className="ml-4 mr-[8px] size-6" />
    </footer>
  );
}

const SIDE = [
  ['info', 'Information'], ['source', 'Source'], ['symbology', 'Symbology'], ['labels', 'Labels'], ['diagrams', 'Diagrams'],
  ['cube', '3D View'], ['fields', 'Source Fields'], ['form', 'Attributes Form'], ['joins', 'Joins'], ['storage', 'Auxiliary Storage'],
  ['actions', 'Actions'], ['display', 'Display'], ['rendering', 'Rendering'], ['variables', 'Variables'], ['metadata', 'Metadata'],
  ['deps', 'Dependencies'], ['legend', 'Legend'], ['server', 'QGIS Server'], ['digitizing', 'Digitizing'],
];

const svgGray = '#c4c4c4';
const THUMBS = [
  <g fill={svgGray}><path d="M0 16L24 0l24 16v4h-4v22H4V20H0z" /><path d="M9 16h30v30H9z" fill="#fff" /><circle cx="27" cy="22" r="3.500" /><path d="M22 26l7 1 5 8-1 2-5-4 1 9H14l6-14zM15 27l4-2-2 10h-4z" /></g>,
  <g fill={svgGray}><path d="M0 24L24 0l24 24h-5v18H5V24z" /><text x="8" y="27" fontSize="13" fontWeight="700" fill="#fff" fontFamily="Liberation Sans">B&amp;B</text></g>,
  <g fill={svgGray}><path d="M18 3l3-1 3 6 3-6 3 1-4 9 13 32H10l12-32z" /></g>,
  <g fill={svgGray}><path d="M13 12h22c6 0 10 4 10 10v22H3V22c0-6 4-10 10-10z" /><path d="M8 18h14v8H8zM28 18h13v8H28z" fill="#fff" /></g>,
  <g fill={svgGray}><path d="M6 20L24 2l18 18h-4v16H10V20z" fill="#dcdcdc" /><circle cx="13" cy="28" r="4" /><path d="M1 24h3v20H1zM17 31h16c6 0 8 3 8 6v5H7v-7z" /></g>,
  <g fill={svgGray}><path d="M0 16h4v12h45v5H0z" /><circle cx="12" cy="18" r="4.500" /><rect x="18" y="20" width="29" height="11" rx="5" /><rect x="5" y="24" width="12" height="5" /></g>,
];

const Label = ({ children, htmlFor }) => <label htmlFor={htmlFor} className="w-[101px] shrink-0 self-center whitespace-nowrap">{children}</label>;
const Row = ({ label, children, className = '', over = 1, htmlFor }) => (
  <div className={'flex ' + className}>
    <Label htmlFor={htmlFor}>{label}</Label>
    <div className="flex min-w-0 flex-1">{children}</div>
    <div className="ml-[22px] mr-1 flex shrink-0 flex-col justify-center gap-[18px]">
      {Array.from({ length: over }, (_, i) => <Override key={i} label={label + ' data defined override'} />)}
    </div>
  </div>
);
const ColorBtn = ({ label, className }) => (
  <button aria-label={label} disabled className={'flex flex-1 items-stretch border border-[#bfbfbf] bg-[#ccc] ' + className}>
    <span className="my-px ml-auto border-l border-white" />
    <span className="flex w-[17px] items-center justify-center text-[#999]"><Tri className="h-[7px] w-[11px]" /></span>
  </button>
);
const units = ['Millimeter'];

function Dialog() {
  const sym = 'flex h-[33px] w-[37px] items-center justify-center border ';
  const btn = 'h-8 w-[110px] bg-[#e1e1e1] text-[15px] ';
  return (
    <section role="dialog" aria-label="Layer Properties" className="absolute bottom-[77px] left-[154px] right-[292px] top-[95px] flex flex-col border border-[#2b78b5] bg-[#f0f0f0] shadow-[0_4px_22px_rgba(0,0,0,0.4)]">
      <header className="flex h-11 shrink-0 items-center bg-white pl-[11px] text-[17px]">
        <Icon n="qgis" className="size-6" />
        <h1 className="ml-[5px] flex-1 pt-px">Layer Properties - Women | Symbology</h1>
        <button aria-label="Context help" className="w-[70px] pb-px">?</button>
        <button aria-label="Close" className="flex w-[70px] justify-center"><Icon n="thinClose" className="size-[17px]" /></button>
      </header>
      <div className="flex min-h-0 flex-1">
        <div className="flex w-[483px] flex-col bg-[#5e5e5e]">
          <div className="flex h-[25px] items-center border border-[#7a7a7a] bg-white pl-[7px]">
            <Icon n="search" className="size-[14px]" />
            <input aria-label="Search properties" className="min-w-0 flex-1 outline-none" />
          </div>
          <nav className="mt-[9px] flex flex-col text-[17px] text-[#f2f2f2]">
            {SIDE.map(([n, t]) => {
              const s = t === 'Symbology';
              return (
                <button key={t} className={'flex h-[38px] items-center text-left ' + (s ? 'gap-[9px] bg-[#f0f0f0] pl-[7px] text-black' : 'gap-2 pl-[5px]')}>
                  <Icon n={n} className="size-6" /><span className="pt-[3px]">{t}</span>
                </button>
              );
            })}
          </nav>
        </div>
        <div className="flex min-w-0 flex-1 flex-col pl-[7px] text-[15px]">
          <div className="flex min-h-0 flex-1">
            <div className="flex min-w-0 flex-1 flex-col overflow-hidden pt-[3px]">
              <RendererCombo />
              <div className="mt-[9px] flex h-[199px] shrink-0">
                <ul className="h-full w-[472px] border border-[#828790] bg-white text-[16px]">
                  <li className="flex h-[29px] items-center font-bold">
                    <Chevron className="ml-[8px] size-[14px] text-[#444]" w={2.6} />
                    <Icon n="fistCut" className="ml-[10px] size-[17px]" />
                    <span className="ml-[6px] pt-[2px]">Marker</span>
                  </li>
                  <li className="ml-[60px] flex h-[29px] items-center border border-[#99d1ff] bg-[#cce8ff] text-[#111]">
                    <Icon n="fistCut" className="ml-[2px] size-[17px] text-[#0b2a42]" />
                    <span className="ml-[5px] pt-[2px]">SVG marker</span>
                  </li>
                </ul>
                <div className="flex flex-1 items-center justify-center">
                  <svg viewBox="0 0 100 100" className="mr-[-9px] size-[100px]" role="img" aria-label="Symbol preview">
                    <path d="M0 49.500h100M50.500 0v100" stroke="#a0a0a0" />
                    <circle cx="50.500" cy="45" r="8.500" fill="#f0f0f0" stroke="#000" strokeWidth="2.800" />
                    <g transform="translate(38.500 36)">{fist}</g>
                    <path d="M50.500 50v16M45 59h11" stroke="#000" strokeWidth="3" />
                  </svg>
                </div>
              </div>
              <div className="mt-[10px] flex shrink-0 gap-2 pl-px">
                {[['plus', 1], ['minus', 0], ['unlock', 1], ['duplicate', 1], ['up', 0], ['down', 0]].map(([n, on]) => (
                  <button key={n} aria-label={n} disabled={!on} className={sym + (on ? 'border-[#adadad] bg-[#e1e1e1]' : 'border-[#bfbfbf] bg-[#ccc]')}><Icon n={n} className="size-[22px]" /></button>
                ))}
              </div>
              <div className="mt-[10px] h-[2px] shrink-0 border-t border-[#a0a0a0] bg-white" />
              <div className="mt-[11px] flex shrink-0 items-center">
                <label htmlFor="slt" className="w-[128px] whitespace-nowrap pl-px">Symbol layer type</label>
                <Combo id="slt" options={['SVG marker']} className="flex-1" />
              </div>
              <div className="mt-[22px] flex shrink-0 flex-col pl-[14px] pr-[13px]">
                <Row label="Size" over={2} htmlFor="w">
                  <div className="flex h-[65px] min-w-0 flex-1 items-center">
                    <div className="grid min-w-0 flex-1 grid-cols-[55px_1fr] items-center gap-y-[15px]">
                      <label htmlFor="w">Width</label><Spin id="w" label="Width" value="3.533333" />
                      <label htmlFor="h">Height</label><Spin id="h" label="Height" value="3.533333" />
                    </div>
                    <button aria-label="Lock aspect ratio" className="ml-[11px] flex h-[60px] w-6 items-center justify-center border border-[#a8cfec] bg-[#bedbf1]">
                      <svg viewBox="0 0 16 56" className="h-14 w-4" aria-hidden="true">
                        <path d="M1 3h8v14M1 53h8V39" fill="none" stroke="#888" strokeWidth="2" />
                        <path d="M5 27v-3c0-5 7-5 7 0v3" fill="none" stroke="#777" strokeWidth="1.800" />
                        <rect x="2.500" y="26" width="12" height="9" rx="1" fill="#555" />
                      </svg>
                    </button>
                    <Combo label="Size unit" options={units} className="ml-[9px] w-[140px]" />
                  </div>
                </Row>
                <Row label="Fill color" className="mt-[13px]"><ColorBtn label="Fill color" className="h-8" /></Row>
                <Row label="Stroke color" className="mt-[12px]"><ColorBtn label="Stroke color" className="h-[30px]" /></Row>
                <Row label="Stroke width" className="mt-[15px]" htmlFor="sw">
                  <Spin id="sw" label="Stroke width" value="No stroke" disabled className="min-w-0 flex-1" />
                  <Combo label="Stroke width unit" options={units} className="ml-[9px] w-[140px]" />
                </Row>
                <Row label="Rotation" className="mt-[18px]" htmlFor="ro"><Spin id="ro" label="Rotation" value="0.00 °" className="min-w-0 flex-1" /></Row>
                <Row label="Offset" className="mt-[14px]" htmlFor="ox">
                  <div className="grid min-w-0 flex-1 grid-cols-[17px_1fr] items-center gap-y-[9px]">
                    <label htmlFor="ox">x</label><Spin id="ox" label="Offset x" value="0.000000" />
                    <label htmlFor="oy">y</label><Spin id="oy" label="Offset y" value="0.000000" />
                  </div>
                  <Combo label="Offset unit" options={units} className="ml-[9px] w-[140px] self-center" />
                </Row>
                <Row label="Anchor point" over={2} className="mt-[13px]" htmlFor="va">
                  <div className="flex min-w-0 flex-1 flex-col gap-[18px]">
                    <Combo id="va" label="Vertical anchor" options={['VCenter']} />
                    <Combo label="Horizontal anchor" options={['HCenter']} />
                  </div>
                </Row>
                <div className="mt-[13px] grid grid-cols-2 gap-x-2">
                  <h3 className="h-[29px]">SVG Groups</h3>
                  <h3 className="h-[29px]">SVG Image</h3>
                  <div className="flex h-[60px] border border-[#828790] bg-white">
                    <div className="flex h-[30px] flex-1 items-center text-[17px]">
                      <Chevron className="ml-2 size-[14px] text-[#444]" w={2.6} />
                      <Icon n="folder" className="ml-[11px] size-6" />
                      <span className="ml-[6px] pt-[2px]">App Symbols</span>
                    </div>
                    <div className="flex w-6 flex-col items-center bg-[#f0f0f0]">
                      <Chevron d="up" className="my-[8px] size-3 text-[#555]" w={2} />
                      <div className="w-6 flex-1 bg-[#cdcdcd]" />
                    </div>
                  </div>
                  <div className="flex h-[60px] border border-[#828790] bg-white">
                    <div className="flex min-w-0 flex-1 gap-4 overflow-hidden pl-2 pt-1">
                      {THUMBS.map((t, i) => <svg key={i} viewBox="0 0 48 48" className="size-12 shrink-0 overflow-visible" aria-hidden="true">{t}</svg>)}
                    </div>
                    <div className="mr-[2px] flex w-6 flex-col items-center bg-[#f0f0f0]">
                      <Chevron d="up" className="my-[8px] size-3 text-[#555]" w={2} />
                      <div className="w-6 flex-1 bg-[#cdcdcd]" />
                    </div>
                  </div>
                </div>
              </div>
            </div>
            <div className="mr-1 flex w-[26px] flex-col items-center border-l border-white text-[#555]">
              <button aria-label="Scroll up" className="flex h-[34px] items-center"><Chevron d="up" w={2.4} /></button>
              <div className="h-[524px] w-6 bg-[#cdcdcd]" />
              <button aria-label="Scroll down" className="mt-auto flex h-[26px] items-center"><Chevron w={2.4} /></button>
            </div>
          </div>
          <div className="flex h-[46px] shrink-0 items-end gap-[11px] pb-1 pl-px pr-1">
            <button className={btn + 'mr-auto flex items-center border border-[#adadad]'}><span className="flex-1 text-center">Style</span><Tri className="mr-[6px] h-[6px] w-[9px]" /></button>
            <button className={btn + 'border-2 border-[#0078d7]'}>OK</button>
            <button className={btn + 'border border-[#adadad]'}>Cancel</button>
            <button className={btn + 'border border-[#adadad]'}>Apply</button>
            <button className={btn + 'border border-[#adadad]'}>Help</button>
          </div>
        </div>
      </div>
    </section>
  );
}

const T = {
  start: <path d="M1 5l10-1.500v8H1zM12.500 3.300L23 1.500v10H12.500zM1 13h10v8.200L1 19.700zM12.500 13H23v9.800l-10.500-1.600z" fill="#fff" />,
  cortana: <circle cx="12" cy="12" r="9.800" fill="none" stroke="#fff" strokeWidth="2.400" />,
  taskview: <g fill="none" stroke="#fff" strokeWidth="1.300"><path d="M3 7h12v10H3zM3 1v3h12V1M3 23v-3h12v3M20 1v5M20 12v11" /><path d="M18.500 7.500h3v3h-3z" fill="#fff" /></g>,
  firefox: <g><circle cx="12" cy="12.500" r="11" fill="#ff8a16" /><path d="M2 8c-2 8 3 15.500 10 15.500S23 18 23 12c0-5-3-9-7-11 2 5 3 8 1 12-2 5-9 5-11 0-1-3 0-5 1-6-3-1-5 0-5 1z" fill="#f0432c" /><path d="M16 0c5 3 8 8 6.500 14C21 19 17 21 14 21c6-5 6-13 2-21z" fill="#ffd52e" /><circle cx="10.500" cy="10" r="6.500" fill="#1b6ad6" /><path d="M4 8c3 0 4 2 7 2-1 3-3 3-3 5-3-1-4-4-4-7z" fill="#ff9a20" /></g>,
  vee: <g><path d="M4 4l8 16 8-16z" fill="none" stroke="#f0a000" strokeWidth="2" /><g fill="#f0a000"><circle cx="3.500" cy="4" r="2.800" /><circle cx="20.500" cy="4" r="2.800" /><circle cx="12" cy="20.500" r="2.800" /></g></g>,
  avast: <g><path d="M17 1c3-1.500 6 .5 5 4-1 3-3 5-1 9l2 6c0 3-3 4-5 3-4-2-7-3-11-1-3 1.500-6 0-5-3 1-4 2-6 0-9C0 7 2 4 5 5.500 9 7 14 4 17 1z" fill="#ff7a00" /><text x="7.500" y="16.500" fontSize="15" fontWeight="700" fill="#fff">a</text></g>,
  spotify: <g><circle cx="12" cy="12" r="11.500" fill="#1ed760" /><path d="M5 8.200c5-1.500 10-1 14.500 1.300M5.500 12.200c4-1.200 8.500-.8 12.500 1.300M6.500 16c3.500-1 7-.6 10 1.200" fill="none" stroke="#111" strokeWidth="2.100" strokeLinecap="round" /></g>,
  tiles: <g><rect x="1" y="1" width="22" height="22" rx="1.500" fill="#6a93b5" stroke="#a9c4d8" /><path d="M9.500 4h4.500v4.500H9.500zM15 4h4.500v4.500H15zM4 9.500h4.500V14H4zM9.500 9.500h4.500V14H9.500zM15 9.500h4.500V14H15zM4 15h4.500v4.500H4zM9.500 15h4.500v4.500H9.500z" fill="#fff" /><rect x="15" y="15.500" width="9" height="8.500" fill="#d9302c" /><text x="15.500" y="22.500" fontSize="7" fill="#fff">14</text></g>,
  ccleaner: <g><path d="M22 5A10.500 10.500 0 1 0 22 19l-4.500-3.500a5 5 0 1 1 0-7z" fill="#d23a2c" /><path d="M16 1.500l-5 9.500 2.500 1.500z" fill="#3b8fd6" stroke="#3b8fd6" /><path d="M9 10l6 3.500L11 23 0 19c4-1 6-4 9-9z" fill="#f3d9a0" stroke="#d6b470" strokeWidth=".5" /></g>,
  ppt: <g><path d="M13 4h10v16H13z" fill="#fff" stroke="#d04423" strokeWidth="1.500" /><path d="M15 8h6M15 12h6M15 15.500h6" stroke="#d04423" strokeWidth="1.500" /><path d="M1 3l13-2.500v23L1 21z" fill="#d04423" /><text x="4" y="16.500" fontSize="13" fontWeight="700" fill="#fff">P</text></g>,
  keepass: <g><circle cx="12" cy="12" r="11" fill="#5b7fe0" stroke="#dfe6ff" /><circle cx="12" cy="12" r="9.500" fill="#a9bdf5" /><path d="M8 11V8c0-5 8-5 8 0v3" fill="none" stroke="#112" strokeWidth="2.200" /><rect x="6" y="10.500" width="12" height="8.500" rx="1" fill="#112" /><path d="M7 13.500h10M7 16h10" stroke="#a9bdf5" /></g>,
  earth: <g><circle cx="12" cy="12" r="11.500" fill="#9f88bd" /><path d="M2 7l5-5 6 1 1 3-3 2-1 3 3 1-2 4-3 1-2-3-4-2zM16 2l4 3 1 4-3-1-2-3zM17 11l5 0 0 4-3 4-2-3zM9 18l4 0 2 4-4 1-4-2zM3 15l3 2 0 2z" fill="#4fd84a" /><path d="M9 7l3 1-1 4-3-2z" fill="#667" opacity=".6" /></g>,
  excel: <g><path d="M13 4h10v16H13z" fill="#fff" stroke="#1f7145" strokeWidth="1.300" /><path d="M13 8h10M13 12h10M13 16h10M18.500 4v16" stroke="#1f7145" strokeWidth="1.300" /><path d="M1 3l13-2.500v23L1 21z" fill="#1f7145" /><text x="3.500" y="16.500" fontSize="13" fontWeight="700" fill="#fff">X</text></g>,
  word: <g><path d="M13 4h10v16H13z" fill="#fff" stroke="#2b579a" strokeWidth="1.300" /><path d="M14 7.500h7.500M14 10.500h7.500M14 13.500h7.500M14 16.500h7.500" stroke="#2b579a" strokeWidth="1.500" /><path d="M1 3l13-2.500v23L1 21z" fill="#2b579a" /><text x="1.500" y="16.500" fontSize="12" fontWeight="700" fill="#fff">W</text></g>,
  groove: <g fill="none" stroke="#fff" strokeWidth="2.200"><path d="M15 1.800A10.600 10.600 0 1 0 21.500 7.500" /><circle cx="12" cy="12.500" r="3.300" strokeWidth="2.400" /><path d="M18.500 13V3l4 2.500" strokeWidth="1.800" /><path d="M18.500 12a6.500 6.500 0 0 1-6.500 7" strokeWidth="1.600" /></g>,
  notes: <g><path d="M2 3h20v11l-8 8H2z" fill="#ffe500" /><path d="M22 12v10H12l2-8z" fill="#222" /><path d="M12 22l2-8 8-2z" fill="#ffe500" /></g>,
  explorer: <g><path d="M1.500 3h8l1.500 2.500h11.500V21h-21z" fill="#ffd36b" /><path d="M1.500 8h21v13h-21z" fill="#ffe9a6" /><path d="M5 13h14v8h-3.500v-4h-7v4H5z" fill="#35a3dc" /></g>,
  acrobat: <g><path d="M1 1h22v22H1z" fill="#c8100c" /><path d="M5 18.500c2 0 7-8 6.500-13 0-1.500 2-1.500 1.500 0-.5 4 2 9 5.500 10 1.500.5 1 1.800-.5 1.300C14.500 15 9 16 6 18.500c-1 .8-2 0-1 0z" fill="none" stroke="#fff" strokeWidth="1.200" /></g>,
  skype: <g><path d="M7 1a6 6 0 0 1 3 .7A11 11 0 0 1 22.500 14 6 6 0 0 1 14 22.500 11 11 0 0 1 1.500 10 6 6 0 0 1 7 1z" fill="#10a5ea" /><text x="7" y="18" fontSize="17" fontWeight="700" fill="#fff">S</text></g>,
  qgis: ICONS.qgis,
  mail: <g><path d="M1 9l11-7.500L23 9v13H1z" fill="#fff" /><path d="M1 9h22l-10 4.500 3.500 4z" fill="#0c0c0c" /></g>,
  photos: <g><rect x="2" y="2" width="20" height="20" fill="none" stroke="#fff" strokeWidth="1.500" /><path d="M2.500 21.500L9 9l4 5 3-3.500 5.500 7v4z" fill="#fff" /></g>,
};
const APPS = [
  ['firefox', 1], ['vee'], ['avast'], ['spotify', 1], ['tiles'], ['ccleaner'], ['ppt'], ['keepass'], ['earth'], ['excel'], ['word'],
  ['groove'], ['notes', 1], ['explorer', 2], ['acrobat', 2], ['skype', 1], ['qgis', 3], ['mail', 1], ['photos', 1],
];
const TIcon = ({ n, className }) => <svg viewBox="0 0 24 24" className={className} aria-hidden="true">{T[n]}</svg>;

function Taskbar() {
  return (
    <nav className="flex h-[60px] shrink-0 items-stretch bg-[#0c0c0c] text-white">
      {['start', 'cortana', 'taskview'].map((n) => (
        <button key={n} aria-label={n} className="flex w-[72px] items-center justify-center"><TIcon n={n} className="size-[25px]" /></button>
      ))}
      <div className="flex pl-[3px]">
        {APPS.map(([n, r]) => (
          <button key={n} aria-label={n} className="flex w-[69px] flex-col items-center">
            <span className={'flex flex-1 items-center justify-center pt-[3px] ' + (r === 3 ? 'w-[67px] bg-[#383838]' : 'w-full')}><TIcon n={n} className="size-[34px]" /></span>
            <span className={'flex h-[3px] justify-end ' + (r === 3 ? 'w-[67px] bg-[#76b9ed]' : r ? 'w-[55px] bg-[#76b9ed]' : 'w-full')}>{r === 2 && <span className="w-3 bg-[#4a7fa8]" />}</span>
          </button>
        ))}
      </div>
      <div className="ml-auto flex items-center">
        <svg viewBox="0 0 36 36" className="mr-[15px] size-9" aria-hidden="true"><circle cx="17" cy="18" r="15.500" fill="#1b8fd0" stroke="#fff" strokeWidth="2" /><text x="10" y="27" fontSize="25" fontWeight="700" fill="#fff">?</text><circle cx="28" cy="26" r="7.500" fill="#f0a820" /><path d="M28 25v5M28 21.500v2" stroke="#fff" strokeWidth="2.200" /></svg>
        <Chevron d="up" className="size-[18px]" w={1} />
        <svg viewBox="0 0 26 22" className="ml-[14px] h-[22px] w-[26px]" aria-hidden="true"><path d="M7 7h15v9H7z" fill="#fff" /><path d="M5.500 5h18v13h-18zM25 9v5" stroke="#fff" fill="none" strokeWidth="1.400" /><path d="M1 3h7v4c0 2-2 3-3.500 3S1 9 1 7zM3 3V0M6 3V0M4.500 10v6" stroke="#fff" fill="#0c0c0c" strokeWidth="1.400" /></svg>
        <svg viewBox="0 0 24 24" className="ml-[12px] size-6" aria-hidden="true" fill="none" stroke="#fff" strokeWidth="1.300"><path d="M3 23C3 12 9 4 20 4" opacity=".5" /><path d="M7 23C7 14 12 8 20 8" /><path d="M11 23c0-7 4-11 9-11M15 23c0-4 2-7 5-7" /><circle cx="19" cy="21" r="1.500" fill="#fff" /></svg>
        <svg viewBox="0 0 24 24" className="ml-[10px] size-6" aria-hidden="true" fill="none" stroke="#fff" strokeWidth="1.300"><path d="M1 9h4l6-5v16l-6-5H1z" /><path d="M14 9c1.500 2 1.500 4 0 6" /><path d="M17 6.500c3 3.500 3 7.500 0 11" opacity=".7" /><path d="M20 4c4 5 4 11 0 16" opacity=".4" /></svg>
        <div className="ml-[15px] flex w-[92px] flex-col text-center text-[17px] leading-[28px]"><span>13:15</span><span>06.12.2018</span></div>
        <svg viewBox="0 0 40 40" className="ml-[21px] mr-[20px] size-10" aria-hidden="true"><path d="M4 4h24v21H20l-6 6v-6H4z" fill="#fff" /><path d="M9 10h14M9 14.500h14M9 19h10" stroke="#0c0c0c" strokeWidth="1.500" /><circle cx="28" cy="28" r="11" fill="#3a3a3a" stroke="#aaa" /><text x="23.500" y="34" fontSize="16" fill="#fff">1</text></svg>
        <span className="mr-[6px] h-[60px] w-px bg-[#666]" />
      </div>
    </nav>
  );
}

const Bar = ({ children }) => <div className="flex h-[34px] shrink-0 items-center border-b border-[#b9b9b9]">{children}</div>;
const Sep = () => <div className="ml-[2px] h-full w-px bg-[#c0c0c0]" />;

export default function App() {
  return (
    <div className="relative flex h-screen min-h-[1080px] flex-col overflow-hidden bg-[#f0f0f0] font-['Open_Sans',sans-serif] text-black">
      <header className="flex h-[34px] shrink-0 items-center bg-white pl-[2px] text-[17px] text-[#999]">
        <Icon n="qgis" className="size-6" />
        <span className="ml-[6px] flex-1 pt-px">*project - QGIS</span>
        <button aria-label="Minimize" className="flex w-[70px] justify-center"><Icon n="minimize" className="size-4" /></button>
        <button aria-label="Restore" className="flex w-[70px] justify-center"><Icon n="restore" className="size-4" /></button>
        <button aria-label="Close window" className="flex w-[72px] justify-center text-[#999]"><Icon n="thinClose" className="size-4" /></button>
      </header>
      <nav className="flex h-[31px] shrink-0 items-center border-b border-[#e5e5e5] bg-white pt-[3px] text-[17px] text-[#999]">
        <div className="flex gap-[15px] pl-2">
          {['Project', 'Edit', 'View', 'Layer', 'Settings', 'Plugins'].map((m) => <button key={m}>{m}</button>)}
        </div>
        <div className="flex gap-4 pl-[17px]">
          {['Vector', 'Raster', 'Database', 'Web', 'Processing', 'Help', 'Vektor'].map((m) => <button key={m}>{m}</button>)}
        </div>
      </nav>
      <Bar>
        <Handle />
        <div className="flex pl-[3px]">{['newDoc', 'openFolder', 'save', 'saveAs', 'newLayout', 'layoutMgr', 'styleMgr'].map((n) => <Tool key={n} n={n} />)}</div>
        <Sep />
        <Handle />
        <div className="flex pl-[3px]">{['hand', 'pan', 'zoomIn', 'zoomOut', 'zoomOne', 'zoomFull', 'zoomSel', 'zoomLayer', 'zoomLast', 'zoomNext', 'newView', 'newBookmark', 'bookmark', 'refresh'].map((n) => <Tool key={n} n={n} />)}</div>
        <Sep />
        <Handle />
        <div className="flex pl-[3px]">
          <Tool n="identify" active /><Tool n="runAction" /><DropTool muted /><Tool n="select" /><DropTool /><Tool n="selectValue" /><DropTool />
          {['deselect', 'table', 'abacus', 'gear', 'sigma', 'ruler'].map((n) => <Tool key={n} n={n} />)}
          <DropTool /><Tool n="tip" /><Tool n="annot" /><DropTool />
        </div>
      </Bar>
      <Bar>
        <Handle />
        <div className="flex pl-[3px]">{['addLayer', 'newGeopkg', 'newShape', 'newSpatialite', 'chip'].map((n) => <Tool key={n} n={n} />)}</div>
      </Bar>
      <Bar>
        <Handle />
        <div className="flex pl-[3px]">{['camera', 'imgSelect'].map((n) => <Tool key={n} n={n} />)}</div>
      </Bar>
      <div className="mt-[2px] flex min-h-0 flex-1 justify-between">
        <LeftDock />
        <RightDock />
      </div>
      <StatusBar />
      <Taskbar />
      <Dialog />
    </div>
  );
}
